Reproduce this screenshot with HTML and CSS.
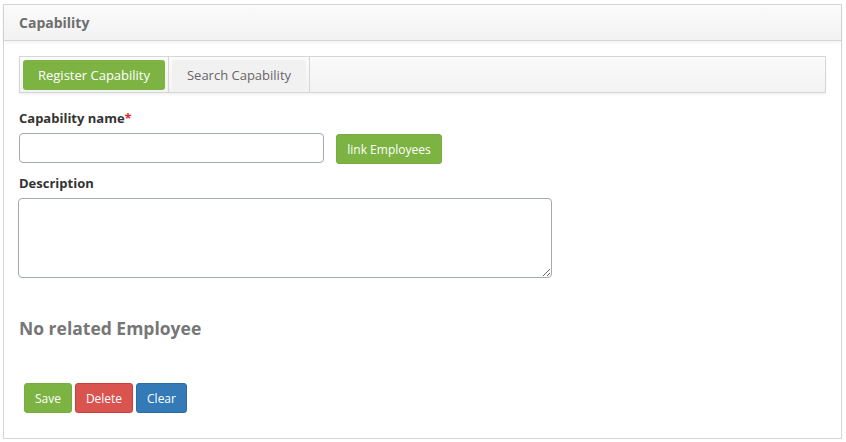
FILE: index.html
```html
<!DOCTYPE html>
<html lang="en">
<head>
<meta charset="utf-8">
<title>Capability</title>
<link rel="stylesheet" href="styles.css">
</head>
<body>
<div class="page">
  <section class="panel">
    <header class="panel-head">
      <h1 class="panel-title">Capability</h1>
    </header>
    <div class="panel-body">
      <nav class="tabs">
        <div class="tab-item"><a class="tab tab-active">Register Capability</a></div>
        <div class="tab-item"><a class="tab">Search Capability</a></div>
      </nav>

      <div class="field">
        <label class="label">Capability name<span class="req">*</span></label>
        <div class="row">
          <input class="input" type="text">
          <button class="btn btn-green btn-link">link Employees</button>
        </div>
      </div>

      <div class="field">
        <label class="label">Description</label>
        <textarea class="textarea"></textarea>
      </div>

      <h2 class="empty">No related Employee</h2>

      <div class="actions">
        <button class="btn btn-green btn-save">Save</button>
        <button class="btn btn-red btn-delete">Delete</button>
        <button class="btn btn-blue btn-clear">Clear</button>
      </div>
    </div>
  </section>
</div>
</body>
</html>
```

FILE: styles.css
```css
* { box-sizing: border-box; }
html, body {
  margin: 0;
  padding: 0;
  background: #fff;
  font-family: "Open Sans", "Liberation Sans", sans-serif;
  color: #333;
}
.page {
  padding: 4px 4px 0 3px;
}
.panel {
  border: 1px solid #d6d6d6;
  background: #fff;
  box-shadow: 0 2px 2px rgba(0,0,0,0.06);
  height: 435px;
}
.panel-head {
  height: 36px;
  border-bottom: 1px solid #d6d6d6;
  background: linear-gradient(#fbfbfb, #f2f2f2);
  box-shadow: 0 2px 3px rgba(0,0,0,0.05);
  display: flex;
  align-items: center;
  padding-left: 15px;
}
.panel-title {
  margin: 0;
  font-size: 14px;
  font-weight: 700;
  color: #6e6e6e;
}
.panel-body {
  padding: 15px 15px 0 15px;
}
.tabs {
  display: flex;
  border: 1px solid #d6d6d6;
  background: linear-gradient(#fbfbfb, #f2f2f2);
  box-shadow: 0 2px 2px rgba(0,0,0,0.05);
  height: 37px;
}
.tab-item {
  padding: 3px 3px 2px 3px;
  border-right: 1px solid #d6d6d6;
  display: flex;
}
.tab {
  display: flex;
  align-items: center;
  justify-content: center;
  height: 30px;
  font-size: 13px;
  color: #666;
  background: #f1f1f1;
  border-radius: 3px;
}
.tab-item:first-child .tab { width: 142px; }
.tab-item:nth-child(2) .tab { width: 134px; }
.tab-active {
  background: #7db343;
  color: #fff;
}
.field {
  margin-top: 16px;
}
.field + .field { margin-top: 10px; }
.label {
  display: block;
  font-size: 13px;
  font-weight: 700;
  color: #333;
  line-height: 18px;
  margin-bottom: 6px;
}
.req { color: #e0262f; }
.row {
  display: flex;
  align-items: flex-start;
  gap: 12px;
}
.input {
  width: 305px;
  height: 30px;
  border: 1px solid #a3aaaa;
  border-radius: 4px;
  font-family: inherit;
  font-size: 13px;
  padding: 4px 8px;
  background: #fff;
}
.textarea {
  display: block;
  width: 534px;
  height: 80px;
  margin-left: -1px;
  border: 1px solid #a3aaaa;
  border-radius: 4px;
  font-family: inherit;
  font-size: 13px;
  resize: both;
  background: #fff;
}
.empty {
  margin: 38px 0 0 0;
  font-size: 17.5px;
  font-weight: 700;
  color: #777;
  line-height: 24px;
}
.actions {
  margin-top: 43px;
  padding-left: 5px;
  display: flex;
  gap: 3px;
}
.btn {
  height: 30px;
  border: 1px solid transparent;
  border-radius: 3px;
  font-family: inherit;
  font-size: 12px;
  color: #fff;
  padding: 0;
  cursor: pointer;
}
.btn-link {
  margin-top: 1px;
  width: 106px;
}
.btn-save { width: 48px; }
.btn-delete { width: 58px; }
.btn-clear { width: 51px; }
.btn-green { background: #7db343; border-color: #78ad40; }
.btn-red { background: #d9534f; border-color: #c9413d; }
.btn-blue { background: #337ab7; border-color: #2e6da4; }
```
